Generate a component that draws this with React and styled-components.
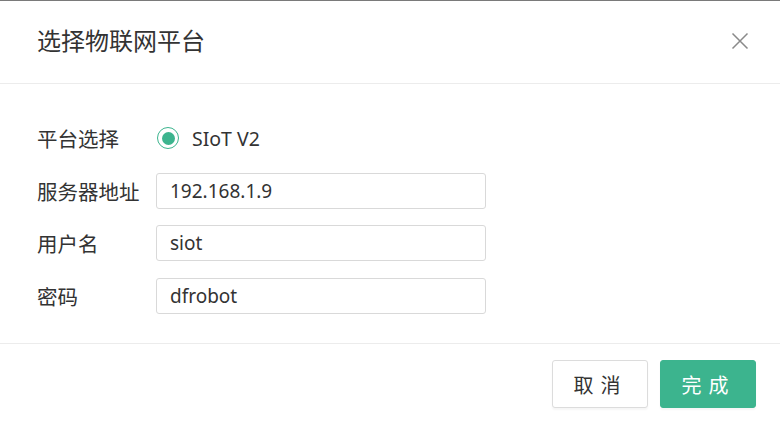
import React from "react";
import styled, { createGlobalStyle } from "styled-components";

const GlobalStyle = createGlobalStyle`
  html, body {
    margin: 0;
    padding: 0;
    background: #fff;
  }
  body {
    font-family: "Noto Sans", "Noto Sans CJK SC", sans-serif;
    color: #333;
  }
`;

const Dialog = styled.div`
  width: 780px;
  height: 423px;
  box-sizing: border-box;
  border-top: 1px solid #7a7a7a;
  background: #fff;
  display: flex;
  flex-direction: column;
`;

const Header = styled.div`
  height: 83px;
  box-sizing: border-box;
  border-bottom: 1px solid #ececec;
  display: flex;
  align-items: center;
  justify-content: space-between;
  padding: 0 31px 0 37px;
`;

const Title = styled.h2`
  margin: 0;
  font-size: 24px;
  font-weight: 400;
  color: #333;
  line-height: 1;
  padding-bottom: 3px;
`;

const CloseButton = styled.button`
  border: 0;
  background: none;
  padding: 0;
  width: 18px;
  height: 18px;
  cursor: pointer;
  display: flex;
  align-items: center;
  justify-content: center;
  margin-bottom: 2px;
`;

const Body = styled.div`
  height: 260px;
  box-sizing: border-box;
  border-bottom: 1px solid #ececec;
  padding: 36px 0 0 37px;
`;

const Form = styled.div`
  display: grid;
  grid-template-columns: 119px 330px;
  grid-auto-rows: 36px;
  row-gap: 16.5px;
  align-items: center;
`;

const Label = styled.span`
  font-size: 20.5px;
  color: #333;
  white-space: nowrap;
`;

const RadioOption = styled.label`
  display: flex;
  align-items: center;
  gap: 13px;
  font-size: 19.5px;
  color: #333;
  cursor: pointer;
  padding-left: 1px;
`;

const RadioCircle = styled.span`
  width: 22px;
  height: 22px;
  border-radius: 50%;
  border: 1.5px solid ${(p) => (p.checked ? "#3cb48e" : "#ccc")};
  display: flex;
  align-items: center;
  justify-content: center;
  box-sizing: border-box;

  &::after {
    content: "";
    width: 13px;
    height: 13px;
    border-radius: 50%;
    background: #3cb48e;
    display: ${(p) => (p.checked ? "block" : "none")};
  }
`;

const Input = styled.input`
  width: 330px;
  height: 36px;
  box-sizing: border-box;
  border: 1px solid #d9d9d9;
  border-radius: 3px;
  padding: 0 13px;
  font-family: "Noto Sans", "Noto Sans CJK SC", sans-serif;
  font-size: 19px;
  color: #333;
  outline: none;
`;

const Footer = styled.div`
  flex: 1;
  display: flex;
  justify-content: flex-end;
  align-items: flex-start;
  gap: 12px;
  padding: 16px 24px 0 0;
`;

const Button = styled.button`
  width: 96px;
  height: 48px;
  border-radius: 3px;
  font-family: "Noto Sans", "Noto Sans CJK SC", sans-serif;
  font-size: 20px;
  letter-spacing: 7px;
  padding-left: 7px;
  cursor: pointer;
  border: 1px solid ${(p) => (p.primary ? "#3cb48e" : "#dcdcdc")};
  background: ${(p) => (p.primary ? "#3cb48e" : "#fff")};
  color: ${(p) => (p.primary ? "#fff" : "#333")};
  box-shadow: 0 2px 2px rgba(0, 0, 0, 0.04);
`;

const fields = [
  { label: "服务器地址", value: "192.168.1.9" },
  { label: "用户名", value: "siot" },
  { label: "密码", value: "dfrobot" },
];

export default function App() {
  return (
    <>
      <GlobalStyle />
      <Dialog>
        <Header>
          <Title>选择物联网平台</Title>
          <CloseButton aria-label="close">
            <svg width="18" height="18" viewBox="0 0 18 18">
              <path d="M1.5 1.5 L16.5 16.5 M16.5 1.5 L1.5 16.5" stroke="#8a8a8a" strokeWidth="1.5" fill="none" />
            </svg>
          </CloseButton>
        </Header>
        <Body>
          <Form>
            <Label>平台选择</Label>
            <RadioOption>
              <RadioCircle checked />
              SIoT V2
            </RadioOption>
            {fields.map((f) => (
              <React.Fragment key={f.label}>
                <Label>{f.label}</Label>
                <Input defaultValue={f.value} />
              </React.Fragment>
            ))}
          </Form>
        </Body>
        <Footer>
          <Button>取消</Button>
          <Button primary>完成</Button>
        </Footer>
      </Dialog>
    </>
  );
}
